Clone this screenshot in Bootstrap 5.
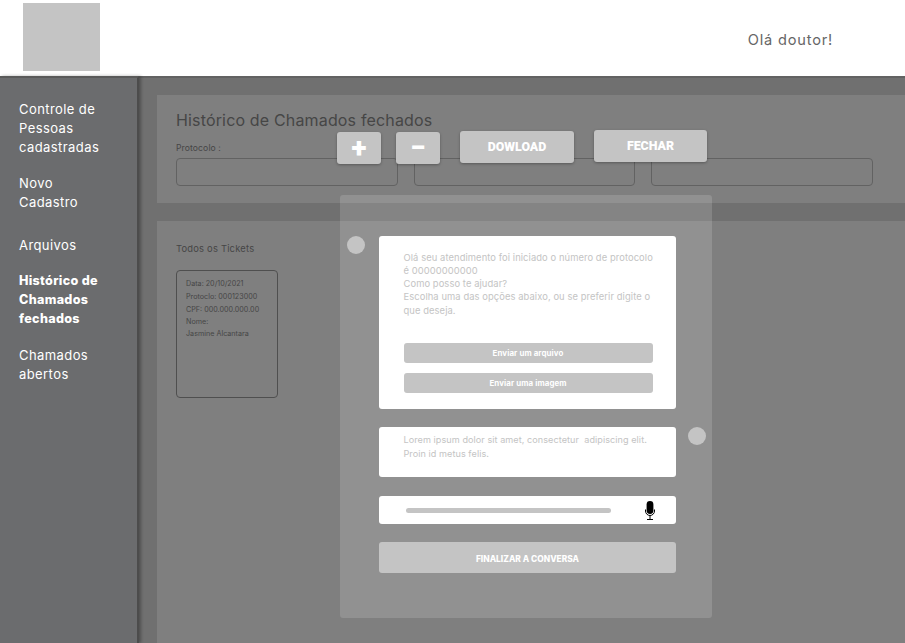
<!DOCTYPE html>
<html lang="pt-BR">
  <head>
    <meta charset="UTF-8" />
    <meta name="viewport" content="width=device-width, initial-scale=1.0" />
    <title>Histórico de Chamados fechados</title>
    <link href="https://cdn.jsdelivr.net/npm/bootstrap@5.3.2/dist/css/bootstrap.min.css" rel="stylesheet" />
    <style>
      body {
        font-family: "Inter", "Liberation Sans", sans-serif;
        background: #757575;
        height: 643px;
        overflow: hidden;
      }
      .page-wrap { height: 643px; }
      .top-header { height: 76px; background: #fff; padding: 3px 72px 5px 23px; }
      .logo-box { width: 77px; height: 68px; background: #c4c4c4; }
      .greeting { font-size: 14.6px; letter-spacing: .8px; color: #666; margin-top: 8px; }
      .content-area { height: 567px; }

      .side-menu {
        width: 139px;
        flex: none;
        background: #6b6c6e;
        padding: 22px 0 0 19px;
        border-top: 2px solid #5a5a5a;
        border-right: 2px solid #4c4c4c;
        box-shadow: 2px 0 3px rgba(0, 0, 0, .3);
        z-index: 1;
      }
      .side-menu a {
        display: block;
        color: #fff;
        font-size: 13px;
        letter-spacing: .42px;
        line-height: 19.2px;
        margin-bottom: 16px;
        text-decoration: none;
        white-space: nowrap;
      }
      .side-menu a.gap-big { margin-bottom: 24px; }
      .side-menu a.active-item { font-weight: 800; font-size: 12.6px; letter-spacing: .3px; line-height: 19px; margin-bottom: 18px; }

      .main-area {
        background: #707070;
        border-top: 2px solid #626262;
        padding: 17px 0 0 18px;
      }
      .panel-search, .panel-tickets { background: #7f7f7f; }
      .panel-search { height: 108px; padding: 15px 33px 0 19px; margin-bottom: 18px; }
      .panel-tickets { height: 440px; padding: 21px 19px; }
      .page-title { font-size: 16px; letter-spacing: .16px; font-weight: 400; color: #464646; margin: 0 0 12px; line-height: 20px; }
      .field-label { font-size: 8.6px; letter-spacing: .1px; color: #464646; margin-bottom: 3px; display: block; line-height: 12px; height: 13px; }
      .field-box {
        height: 28px;
        min-height: 0;
        background: transparent;
        border: 1px solid #626262;
        border-radius: 4px;
      }
      .fields-grid { display: grid; grid-template-columns: repeat(3, 221.5px); column-gap: 16px; }
      .tickets-title { font-size: 9.4px; letter-spacing: .2px; color: #464646; line-height: 13px; margin-bottom: 15px; }
      .ticket-box {
        width: 102px;
        height: 128px;
        border: 1px solid #4f4f4f;
        border-radius: 4px;
        padding: 6px 9px;
        font-size: 7.2px;
        line-height: 13px;
        color: #464646;
      }
      .ticket-box p { margin: 0; white-space: nowrap; }
      .ticket-box .name-line { line-height: 12px; }

      /* botoes e janela sobre o conteudo */
      .tool-bar { position: absolute; left: 337px; top: 130px; display: flex; z-index: 3; }
      .tool-btn {
        background: #c4c4c4;
        color: #fff;
        border: 0;
        border-radius: 3px;
        box-shadow: 0 1px 3px rgba(0, 0, 0, .3);
        font-family: "Roboto", sans-serif;
        font-weight: 900;
        padding: 0;
      }
      .tool-sq { width: 44px; height: 32px; margin-top: 2px; font-size: 28px; line-height: 32px; margin-right: 15px; }
      .tool-wide { width: 114px; height: 32px; font-size: 12.4px; margin-top: 1px; padding-bottom: 0; }
      .tool-wide.mark-left { margin-left: 5px; margin-right: 20px; }
      .tool-wide.mark-right { width: 113px; margin-top: 0; }

      .chat-window {
        position: absolute;
        left: 340px;
        top: 195px;
        width: 372px;
        height: 423px;
        background: rgba(255, 255, 255, .14);
        border-radius: 3px;
        padding-top: 41px;
        display: grid;
        grid-template-columns: 39px 297px 36px;
        grid-auto-rows: min-content;
        z-index: 2;
      }
      .chat-dot { width: 18px; height: 18px; border-radius: 50%; background: #c4c4c4; }
      .dot-left { margin-left: 7px; }
      .dot-right { margin-left: 12px; }
      .chat-card {
        grid-column: 2;
        background: #fff;
        border-radius: 3px;
        padding: 14.5px 10px 14px 24.5px;
        font-size: 9.4px;
        letter-spacing: .08px;
        line-height: 13.3px;
        color: #c4c4c4;
      }
      .chat-card p { margin: 0; white-space: nowrap; }
      .card-first { height: 173px; margin-bottom: 18px; }
      .card-second { height: 50px; margin-bottom: 19px; padding-top: 6px; font-size: 9.1px; letter-spacing: .06px; line-height: 14px; }
      .opt-btn {
        display: block;
        width: 249px;
        height: 19.5px;
        background: #c4c4c4;
        color: #fff;
        border: 0;
        border-radius: 3px;
        font-size: 7.9px;
        letter-spacing: .1px;
        font-weight: 700;
        line-height: 19px;
        padding: 0;
      }
      .opt-list { margin-top: 26.5px; display: flex; flex-direction: column; gap: 10.5px; }
      .msg-input {
        grid-column: 2;
        height: 28px;
        background: #fff;
        border-radius: 3px;
        padding: 0 21px 0 27px;
        margin-bottom: 18px;
      }
      .msg-line { width: 205px; height: 5px; border-radius: 3px; background: #c4c4c4; }
      .end-btn {
        grid-column: 2;
        height: 31px;
        background: #c4c4c4;
        color: #fff;
        border: 0;
        border-radius: 3px;
        font-size: 8.4px;
        font-weight: 800;
        padding: 3px 0 0;
      }
    </style>
  </head>
  <body>
    <div class="page-wrap position-relative">
      <header class="top-header d-flex justify-content-between align-items-center">
        <div class="logo-box"></div>
        <span class="greeting">Olá doutor!</span>
      </header>

      <div class="content-area d-flex">
        <nav class="side-menu">
          <a href="#">Controle de<br />Pessoas<br />cadastradas</a>
          <a href="#" class="gap-big">Novo<br />Cadastro</a>
          <a href="#">Arquivos</a>
          <a href="#" class="active-item">Histórico de<br />Chamados<br />fechados</a>
          <a href="#">Chamados<br />abertos</a>
        </nav>

        <main class="main-area flex-grow-1">
          <section class="panel-search">
            <h1 class="page-title">Histórico de Chamados fechados</h1>
            <label class="field-label">Protocolo :</label>
            <div class="fields-grid">
              <input type="text" class="form-control field-box" />
              <input type="text" class="form-control field-box" />
              <input type="text" class="form-control field-box" />
            </div>
          </section>
          <section class="panel-tickets">
            <div class="tickets-title">Todos os Tickets</div>
            <div class="ticket-box">
              <p>Data: 20/10/2021</p>
              <p>Protoclo: 000123000</p>
              <p>CPF: 000.000.000.00</p>
              <p class="name-line">Nome:</p>
              <p class="name-line">Jasmine Alcantara</p>
            </div>
          </section>
        </main>
      </div>

      <div class="tool-bar">
        <button class="tool-btn tool-sq">+</button>
        <button class="tool-btn tool-sq">−</button>
        <button class="tool-btn tool-wide mark-left">DOWLOAD</button>
        <button class="tool-btn tool-wide mark-right">FECHAR</button>
      </div>

      <div class="chat-window">
        <div class="chat-dot dot-left"></div>
        <div class="chat-card card-first">
          <p>Olá seu atendimento foi iniciado o número de protocolo<br />é 00000000000<br />Como posso te ajudar?<br />Escolha uma das opções abaixo, ou se preferir digite o<br />que deseja.</p>
          <div class="opt-list">
            <button class="opt-btn">Enviar um arquivo</button>
            <button class="opt-btn">Enviar uma imagem</button>
          </div>
        </div>
        <div></div>

        <div class="chat-card card-second">
          <p>Lorem ipsum dolor sit amet, consectetur&nbsp; adipiscing elit.<br />Proin id metus felis.</p>
        </div>
        <div class="chat-dot dot-right"></div>

        <div class="msg-input d-flex align-items-center justify-content-between">
          <div class="msg-line"></div>
          <svg width="10" height="19" viewBox="0 0 10 19" aria-hidden="true">
            <rect x="1.6" y="0" width="6.8" height="13" rx="3.4" fill="#000" />
            <path d="M.5 8.5v1.5a4.5 4.5 0 0 0 9 0V8.5" fill="none" stroke="#000" stroke-width="1" />
            <path d="M5 14.5v4M2 18.5h6" fill="none" stroke="#000" stroke-width="1" />
          </svg>
        </div>

        <button class="end-btn">FINALIZAR A CONVERSA</button>
      </div>
    </div>

    <script src="https://cdn.jsdelivr.net/npm/bootstrap@5.3.2/dist/js/bootstrap.bundle.min.js"></script>
  </body>
</html>
